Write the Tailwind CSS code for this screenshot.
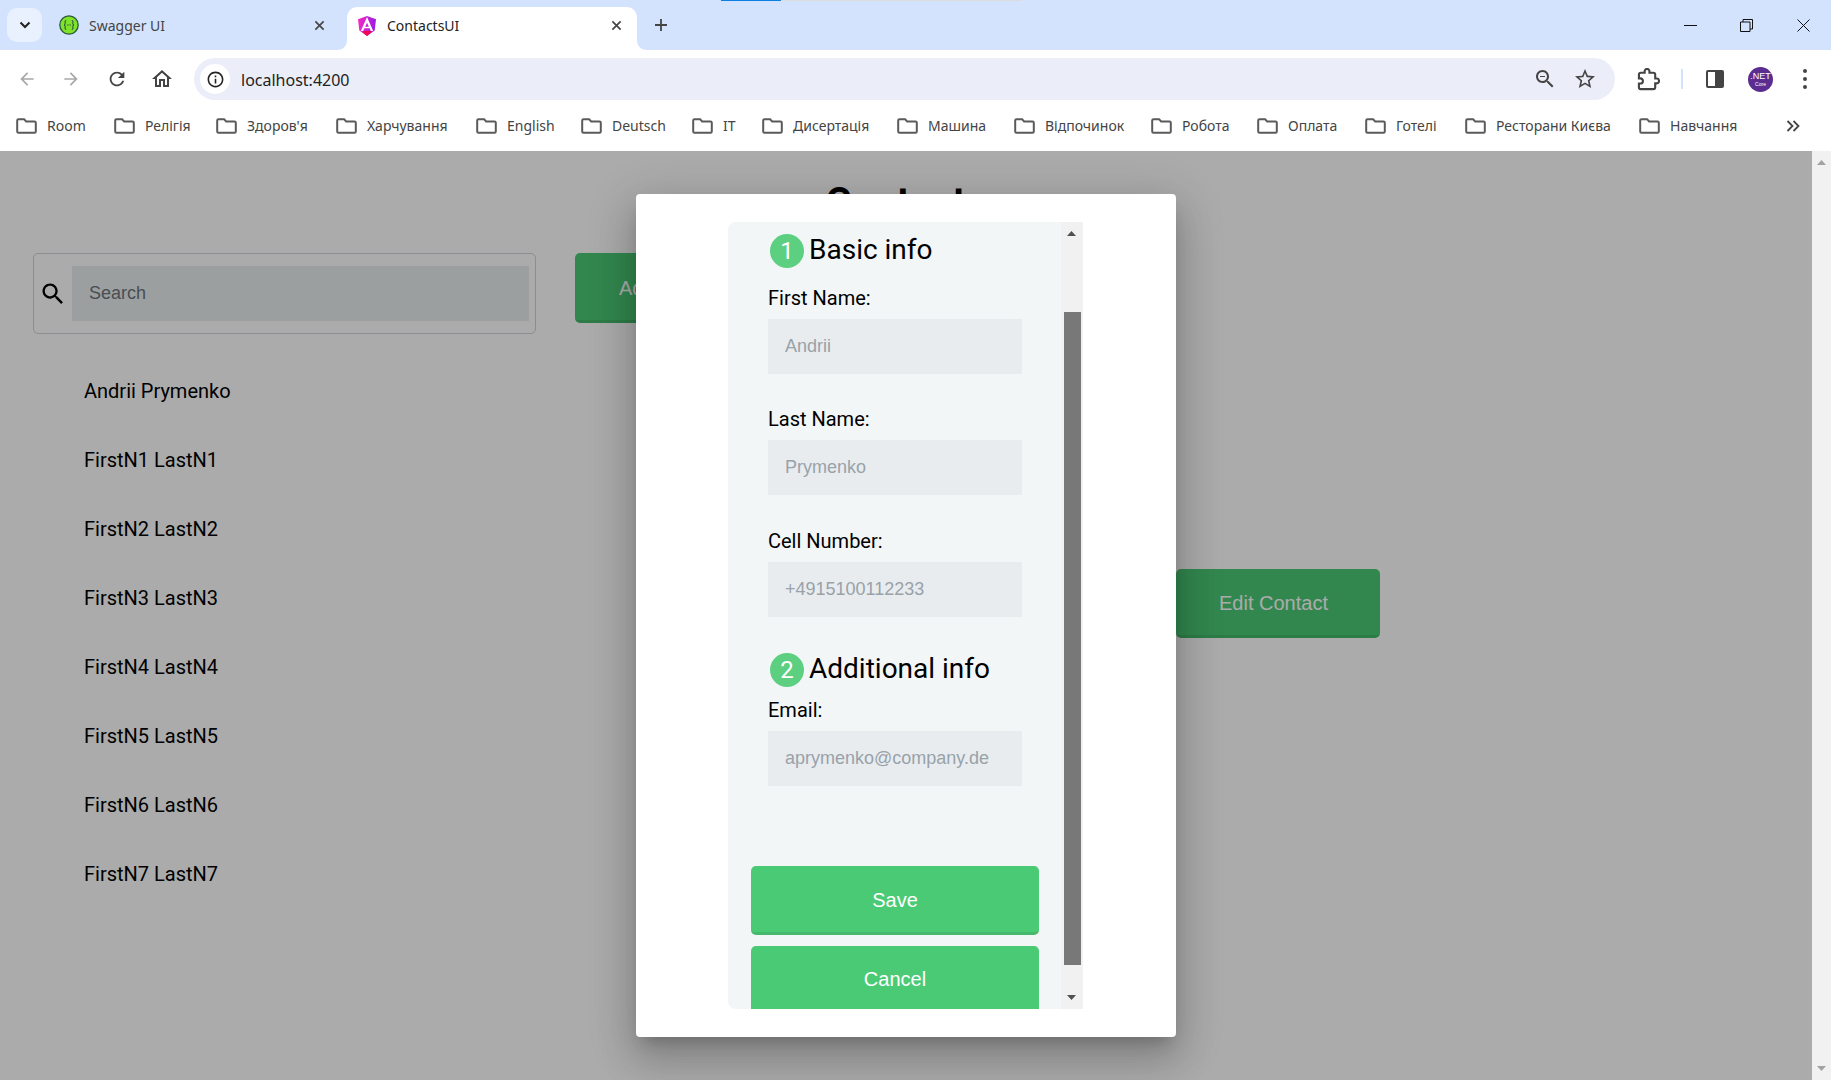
<!doctype html>
<html lang="en">
  <head>
    <meta charset="UTF-8" />
    <script src="https://cdn.jsdelivr.net/npm/@tailwindcss/browser@4"></script>
    <title>ContactsUI</title>
  </head>

  <body class="h-[1080px] overflow-hidden bg-white font-['Noto_Sans',sans-serif]">
    <svg class="hidden">
      <symbol id="folder" viewBox="0 0 21 16"><path d="M2.5 1.2h5.6l2 2.3h8.4c.8 0 1.3.5 1.3 1.3v8.7c0 .8-.5 1.3-1.3 1.3h-16c-.8 0-1.3-.5-1.3-1.3V2.5c0-.8.5-1.3 1.3-1.3z" fill="none" stroke="#5a5a5a" stroke-width="2"/></symbol>
      <symbol id="x" viewBox="0 0 12 12"><path d="M1.5 1.5l9 9m0-9l-9 9" fill="none" stroke-width="1.8" stroke="#444"/></symbol>
    </svg>

    <!-- tab strip -->
    <div class="relative flex h-[50px] bg-[#d3e3fd]">
      <div class="absolute left-[721px] top-0 h-[1px] w-[60px] bg-[#0b7fe3]"></div>
      <div class="absolute left-[781px] top-0 h-[1px] w-[240px] bg-[#dcdcdc]"></div>
      <div class="ml-[7px] mt-[8px] flex h-[34px] w-[35px] items-center justify-center rounded-[10px] bg-[#e9f1fe]">
        <svg class="w-[12px] h-[12px]" viewBox="0 0 12 12"><path d="M1.5 3.5L6 8l4.5-4.5" fill="none" stroke="#222" stroke-width="2"/></svg>
      </div>
      <div class="ml-[17px] flex w-[288px] items-center">
        <svg class="h-[20px] w-[20px]" viewBox="0 0 20 20">
          <circle cx="10" cy="10" r="9.2" fill="#7fe32a" stroke="#2c5a3c" stroke-width="1.3"/>
          <path d="M7.2 5.5c-1.6 0-1 1.5-1 3 0 1-.6 1.5-1.2 1.5.6 0 1.2.5 1.2 1.5 0 1.5-.6 3 1 3m5.6-9c1.6 0 1 1.5 1 3 0 1 .6 1.5 1.2 1.5-.6 0-1.2.5-1.2 1.5 0 1.5.6 3-1 3" fill="none" stroke="#173647" stroke-width="1"/>
          <path d="M8 10h.8m.8 0h.8m.8 0h.8" stroke="#173647" stroke-width="1.1"/>
        </svg>
        <span class="ml-[10px] text-[14px] text-[#444]">Swagger UI</span>
        <svg class="ml-auto mr-[22px] h-[11px] w-[11px]"><use href="#x"/></svg>
      </div>
      <div class="relative mt-[7px] flex h-[43px] w-[290px] items-center rounded-t-[10px] bg-white pb-[6px] pl-[10px]">
        <svg class="absolute bottom-0 left-[-10px] h-[10px] w-[10px]" viewBox="0 0 10 10"><path d="M10 0v10H0c6 0 10-4 10-10z" fill="#fff"/></svg>
        <svg class="absolute bottom-0 right-[-10px] h-[10px] w-[10px]" viewBox="0 0 10 10"><path d="M0 0v10h10C4 10 0 6 0 0z" fill="#fff"/></svg>
        <svg class="h-[20px] w-[20px]" viewBox="0 0 20 20">
          <defs><linearGradient id="ng" x1="0" y1="0" x2="1" y2="0"><stop offset="0" stop-color="#f52bc0"/><stop offset="1" stop-color="#9a1ae6"/></linearGradient></defs>
          <path d="M10 0l9 3.3-1.3 11.3L10 20l-7.7-5.4L1 3.3z" fill="url(#ng)"/>
          <path d="M6 15h8l-.4 1.8L10 20l-3.6-3.2z" fill="#f0064a"/>
          <path d="M10 1l6.2 14h-2.4l-1.1-2.8H7.3L6.2 15H3.8zM10 6.8L8.2 10.7h3.6z" fill="#fff"/>
        </svg>
        <span class="ml-[10px] text-[14px] text-[#222]">ContactsUI</span>
        <svg class="ml-auto mr-[15px] h-[11px] w-[11px]"><use href="#x"/></svg>
      </div>
      <svg class="ml-[17px] mt-[18px] h-[14px] w-[14px]" viewBox="0 0 14 14"><path d="M7 1v12M1 7h12" stroke="#444" stroke-width="1.8"/></svg>
      <div class="ml-auto flex h-[50px] items-center">
        <svg class="mr-[43px] h-[13px] w-[13px]" viewBox="0 0 13 13"><path d="M0 6.5h13" stroke="#111" stroke-width="1"/></svg>
        <svg class="mr-[44px] h-[13px] w-[13px]" viewBox="0 0 13 13"><path d="M.5 3h9.5v9.5H.5zM3 3V.5h9.5V10H10" fill="none" stroke="#111" stroke-width="1"/></svg>
        <svg class="mr-[21px] h-[13px] w-[13px]" viewBox="0 0 13 13"><path d="M.5.5l12 12m0-12l-12 12" fill="none" stroke="#111" stroke-width="1"/></svg>
      </div>
    </div>

    <!-- toolbar -->
    <div class="flex h-[50px] items-end rounded-t-[10px] bg-white">
      <div class="flex h-[50px] w-[194px] items-center pb-0 pt-[8px]">
        <svg class="ml-[17px] h-[20px] w-[20px]" viewBox="0 0 24 24"><path fill="#a8a8a8" d="M20 11H7.83l5.59-5.59L12 4l-8 8 8 8 1.41-1.41L7.83 13H20v-2z"/></svg>
        <svg class="ml-[24px] h-[20px] w-[20px] rotate-180" viewBox="0 0 24 24"><path fill="#a8a8a8" d="M20 11H7.83l5.59-5.59L12 4l-8 8 8 8 1.41-1.41L7.83 13H20v-2z"/></svg>
        <svg class="ml-[25px] h-[22px] w-[22px]" viewBox="0 0 24 24"><path fill="#444" d="M17.65 6.35C16.2 4.9 14.21 4 12 4c-4.42 0-7.99 3.58-7.99 8s3.57 8 7.99 8c3.73 0 6.84-2.55 7.73-6h-2.08c-.82 2.33-3.04 4-5.65 4-3.31 0-6-2.69-6-6s2.69-6 6-6c1.66 0 3.14.69 4.22 1.78L13 11h7V4l-2.35 2.35z"/></svg>
        <svg class="ml-[22px] h-[24px] w-[24px]" viewBox="0 0 24 24"><path fill="#444" d="M12 5.69l5 4.5V18h-2v-6H9v6H7v-7.81l5-4.5M12 3L2 12h3v8h6v-6h2v6h6v-8h3L12 3z"/></svg>
      </div>
      <div class="flex h-[42px] w-[1421px] items-center rounded-full bg-[#ebeef8] pl-[6px]">
        <div class="flex h-[30px] w-[30px] items-center justify-center rounded-full bg-white">
          <svg class="h-[19px] w-[19px]" viewBox="0 0 24 24"><path fill="#222" d="M11 7h2v2h-2zm0 4h2v6h-2zm1-9C6.48 2 2 6.48 2 12s4.48 10 10 10 10-4.48 10-10S17.52 2 12 2zm0 18c-4.41 0-8-3.59-8-8s3.59-8 8-8 8 3.59 8 8-3.59 8-8 8z"/></svg>
        </div>
        <span class="ml-[11px] mt-[2px] text-[16px] text-[#222]">localhost:4200</span>
        <svg class="ml-auto h-[24px] w-[24px]" viewBox="0 0 24 24"><path fill="#444" d="M15.5 14h-.79l-.28-.27C15.41 12.59 16 11.11 16 9.5 16 5.91 13.09 3 9.5 3S3 5.91 3 9.5 5.91 16 9.5 16c1.61 0 3.09-.59 4.23-1.57l.27.28v.79l5 4.99L20.49 19l-4.99-5zm-6 0C7.01 14 5 11.99 5 9.5S7.01 5 9.5 5 14 7.01 14 9.5 11.99 14 9.5 14zM7 9h5v1H7z"/></svg>
        <svg class="ml-[16px] mr-[18px] h-[24px] w-[24px]" viewBox="0 0 24 24"><path fill="#444" d="M22 9.24l-7.19-.62L12 2 9.19 8.63 2 9.24l5.46 4.73L5.82 21 12 17.27 18.18 21l-1.63-7.03L22 9.24zM12 15.4l-3.76 2.27 1-4.28-3.32-2.88 4.38-.38L12 6.1l1.71 4.04 4.38.38-3.32 2.88 1 4.28L12 15.4z"/></svg>
      </div>
      <div class="flex h-[42px] flex-1 items-center">
        <svg class="ml-[22px] h-[23px] w-[23px]" viewBox="0 0 24 24"><path fill="none" stroke="#444" stroke-width="2.2" d="M20.5 11H19V7c0-1.1-.9-2-2-2h-4V3.5C13 2.12 11.88 1 10.5 1S8 2.12 8 3.5V5H4c-1.1 0-1.99.9-1.99 2v3.8H3.5c1.49 0 2.7 1.21 2.7 2.7s-1.21 2.7-2.7 2.7H2V20c0 1.1.9 2 2 2h13c1.1 0 2-.9 2-2v-4h1.5c1.38 0 2.5-1.12 2.5-2.5S21.88 11 20.5 11z"/></svg>
        <div class="ml-[21px] h-[20px] w-[2px] bg-[#d3e3fd]"></div>
        <div class="ml-[23px] flex h-[18px] w-[18px] overflow-hidden rounded-[2px] border-2 border-[#444]"><div class="w-1/2"></div><div class="w-1/2 bg-[#444]"></div></div>
        <div class="ml-[24px] flex h-[25px] w-[25px] flex-col items-center justify-center rounded-full bg-[#5c2d91] text-white"><span class="font-['Liberation_Sans'] text-[9px] leading-[9px]">.NET</span><span class="font-['Liberation_Sans'] text-[5px] leading-[6px]">Core</span></div>
        <div class="ml-[30px] flex flex-col gap-[4px]"><div class="h-[4px] w-[4px] rounded-full bg-[#444]"></div><div class="h-[4px] w-[4px] rounded-full bg-[#444]"></div><div class="h-[4px] w-[4px] rounded-full bg-[#444]"></div></div>
      </div>
    </div>

    <!-- bookmarks -->
    <div class="flex h-[51px] items-center pl-[16px] text-[14px] text-[#444]">
      <div class="flex w-[98px] items-center gap-[10px]"><svg class="h-[16px] w-[21px]"><use href="#folder"/></svg><span>Room</span></div>
      <div class="flex w-[102px] items-center gap-[10px]"><svg class="h-[16px] w-[21px]"><use href="#folder"/></svg><span>Релігія</span></div>
      <div class="flex w-[120px] items-center gap-[10px]"><svg class="h-[16px] w-[21px]"><use href="#folder"/></svg><span>Здоров'я</span></div>
      <div class="flex w-[140px] items-center gap-[10px]"><svg class="h-[16px] w-[21px]"><use href="#folder"/></svg><span>Харчування</span></div>
      <div class="flex w-[105px] items-center gap-[10px]"><svg class="h-[16px] w-[21px]"><use href="#folder"/></svg><span>English</span></div>
      <div class="flex w-[111px] items-center gap-[10px]"><svg class="h-[16px] w-[21px]"><use href="#folder"/></svg><span>Deutsch</span></div>
      <div class="flex w-[70px] items-center gap-[10px]"><svg class="h-[16px] w-[21px]"><use href="#folder"/></svg><span>IT</span></div>
      <div class="flex w-[135px] items-center gap-[10px]"><svg class="h-[16px] w-[21px]"><use href="#folder"/></svg><span>Дисертація</span></div>
      <div class="flex w-[117px] items-center gap-[10px]"><svg class="h-[16px] w-[21px]"><use href="#folder"/></svg><span>Машина</span></div>
      <div class="flex w-[137px] items-center gap-[10px]"><svg class="h-[16px] w-[21px]"><use href="#folder"/></svg><span>Відпочинок</span></div>
      <div class="flex w-[106px] items-center gap-[10px]"><svg class="h-[16px] w-[21px]"><use href="#folder"/></svg><span>Робота</span></div>
      <div class="flex w-[108px] items-center gap-[10px]"><svg class="h-[16px] w-[21px]"><use href="#folder"/></svg><span>Оплата</span></div>
      <div class="flex w-[100px] items-center gap-[10px]"><svg class="h-[16px] w-[21px]"><use href="#folder"/></svg><span>Готелі</span></div>
      <div class="flex w-[174px] items-center gap-[10px]"><svg class="h-[16px] w-[21px]"><use href="#folder"/></svg><span>Ресторани Києва</span></div>
      <div class="flex w-[147px] items-center gap-[10px]"><svg class="h-[16px] w-[21px]"><use href="#folder"/></svg><span>Навчання</span></div>
      <svg class="h-[12px] w-[14px]" viewBox="0 0 14 12"><path d="M1.5 1l5 5-5 5M7.5 1l5 5-5 5" fill="none" stroke="#444" stroke-width="1.8"/></svg>
    </div>

    <!-- page -->
    <div class="flex h-[929px]">
      <div class="relative w-[1812px] overflow-hidden bg-white">
        <h1 class="mt-[28px] text-center font-[Roboto] text-[40px] font-bold leading-[47px] text-black">Contacts</h1>
        <div class="mt-[27px] flex pl-[33px]">
          <div class="flex h-[81px] w-[503px] items-center rounded-[5px] border border-[#ced4da] pl-[5px]">
            <svg class="h-[28px] w-[28px] shrink-0" viewBox="0 0 24 24"><path fill="#000" d="M15.5 14h-.79l-.28-.27C15.41 12.59 16 11.11 16 9.5 16 5.91 13.09 3 9.5 3S3 5.91 3 9.5 5.91 16 9.5 16c1.61 0 3.09-.59 4.23-1.57l.27.28v.79l5 4.99L20.49 19l-4.99-5zm-6 0C7.01 14 5 11.99 5 9.5S7.01 5 9.5 5 14 7.01 14 9.5 11.99 14 9.5 14z"/></svg>
            <input placeholder="Search" class="ml-[5px] h-[55px] w-[457px] bg-[#e9eded] pl-[17px] font-['Liberation_Sans'] text-[18px] outline-none placeholder:text-[#6c757d]" />
          </div>
          <button class="ml-[39px] h-[70px] w-[204px] rounded-[5px] border-b-[3px] border-[#44b96b] bg-[#4bca75] pr-[6px] pt-[2px] font-['Liberation_Sans'] text-[20px] text-white">Add Contact</button>
        </div>
        <div class="mt-[22px] flex">
          <ul class="w-[1176px] pl-[84px] font-[Roboto] text-[20px] text-black">
            <li class="flex h-[69px] items-center">Andrii Prymenko</li>
            <li class="flex h-[69px] items-center">FirstN1 LastN1</li>
            <li class="flex h-[69px] items-center">FirstN2 LastN2</li>
            <li class="flex h-[69px] items-center">FirstN3 LastN3</li>
            <li class="flex h-[69px] items-center">FirstN4 LastN4</li>
            <li class="flex h-[69px] items-center">FirstN5 LastN5</li>
            <li class="flex h-[69px] items-center">FirstN6 LastN6</li>
            <li class="flex h-[69px] items-center">FirstN7 LastN7</li>
          </ul>
          <button class="mt-[213px] h-[69px] w-[204px] rounded-[5px] border-b-[3px] border-[#44b96b] bg-[#4bca75] pr-[9px] pt-[2px] font-['Liberation_Sans'] text-[20px] text-white">Edit Contact</button>
        </div>

        <!-- dialog -->
        <div class="absolute inset-0 flex items-center justify-center bg-black/33">
          <div class="flex h-[843px] w-[540px] justify-center rounded-[4px] bg-white pr-[1px] pt-[28px] shadow-[0_11px_15px_-7px_rgba(0,0,0,.2),0_24px_38px_3px_rgba(0,0,0,.14),0_9px_46px_8px_rgba(0,0,0,.12)]">
            <div class="flex h-[787px] w-[355px]">
              <div class="h-full w-[334px] overflow-hidden rounded-l-[8px] bg-[#f3f6f7] font-[Roboto] text-black">
                <div class="ml-[42px] mt-[12px] flex h-[34px] items-center">
                  <span class="flex h-[34px] w-[34px] items-center justify-center rounded-full bg-[#5ccf80] text-[24px] text-white">1</span>
                  <h2 class="ml-[5px] pb-[3px] text-[28px] leading-[34px]">Basic info</h2>
                </div>
                <div class="flex flex-col items-center">
                  <label class="mt-[18px] block w-[254px] text-[20px] leading-[24px]">First Name:</label>
                  <input placeholder="Andrii" class="mt-[9px] h-[55px] w-[254px] bg-[#e9ecef] pl-[17px] font-['Liberation_Sans'] text-[18px] outline-none placeholder:text-[#98a2a9]" />
                  <label class="mt-[33px] block w-[254px] text-[20px] leading-[24px]">Last Name:</label>
                  <input placeholder="Prymenko" class="mt-[9px] h-[55px] w-[254px] bg-[#e9ecef] pl-[17px] font-['Liberation_Sans'] text-[18px] outline-none placeholder:text-[#98a2a9]" />
                  <label class="mt-[34px] block w-[254px] text-[20px] leading-[24px]">Cell Number:</label>
                  <input placeholder="+4915100112233" class="mt-[9px] h-[55px] w-[254px] bg-[#e9ecef] pl-[17px] font-['Liberation_Sans'] text-[18px] outline-none placeholder:text-[#98a2a9]" />
                </div>
                <div class="ml-[42px] mt-[36px] flex h-[34px] items-center">
                  <span class="flex h-[34px] w-[34px] items-center justify-center rounded-full bg-[#5ccf80] text-[24px] text-white">2</span>
                  <h2 class="ml-[5px] pb-[3px] text-[28px] leading-[34px]">Additional info</h2>
                </div>
                <div class="flex flex-col items-center">
                  <label class="mt-[11px] block w-[254px] text-[20px] leading-[24px]">Email:</label>
                  <input placeholder="aprymenko@company.de" class="mt-[9px] h-[55px] w-[254px] bg-[#e9ecef] pl-[17px] font-['Liberation_Sans'] text-[18px] outline-none placeholder:text-[#98a2a9]" />
                  <button class="mt-[80px] h-[69px] w-[288px] shrink-0 rounded-[5px] border-b-[3px] border-[#44b96b] bg-[#4bca75] pt-[2px] font-['Liberation_Sans'] text-[20px] text-white">Save</button>
                  <button class="mt-[11px] h-[69px] w-[288px] shrink-0 rounded-[5px] border-b-[3px] border-[#44b96b] bg-[#4bca75] font-['Liberation_Sans'] text-[20px] text-white">Cancel</button>
                </div>
              </div>
              <!-- dialog scrollbar -->
              <div class="relative ml-[-1px] h-full w-[22px] bg-[#f1f1f1]">
                <svg class="absolute left-[6px] top-[9px] h-[5px] w-[9px]" viewBox="0 0 9 5"><path d="M4.5 0L9 5H0z" fill="#505050"/></svg>
                <div class="absolute left-[3px] top-[90px] h-[653px] w-[17px] bg-[#787878]"></div>
                <svg class="absolute bottom-[9px] left-[6px] h-[5px] w-[9px]" viewBox="0 0 9 5"><path d="M4.5 5L9 0H0z" fill="#505050"/></svg>
              </div>
            </div>
          </div>
        </div>
      </div>
      <!-- page scrollbar -->
      <div class="flex w-[19px] flex-col items-center justify-between bg-[#f1f1f1] py-[9px]">
        <svg class="h-[5px] w-[9px]" viewBox="0 0 9 5"><path d="M4.5 0L9 5H0z" fill="#a3a3a3"/></svg>
        <svg class="h-[5px] w-[9px]" viewBox="0 0 9 5"><path d="M4.5 5L9 0H0z" fill="#a3a3a3"/></svg>
      </div>
    </div>
  </body>
</html>
